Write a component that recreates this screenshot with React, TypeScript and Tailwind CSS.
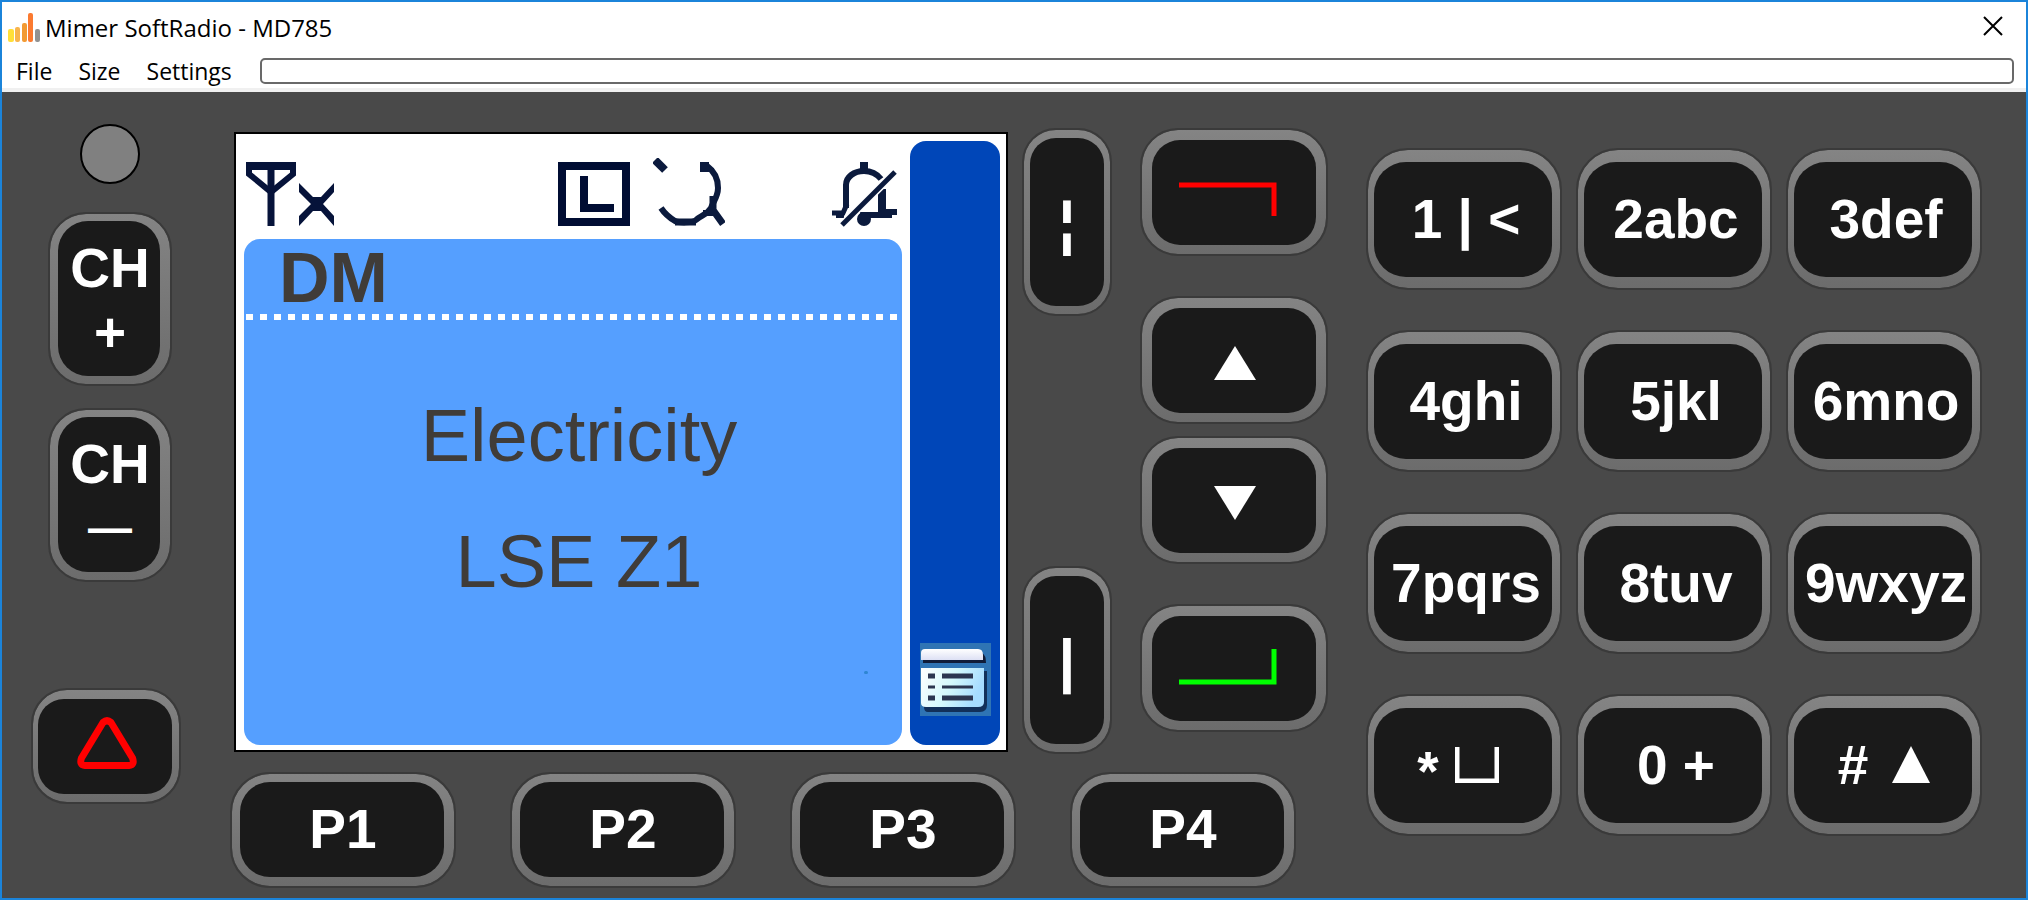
import type { ReactNode } from "react";

type KeyProps = {
  label: string;
  size: string;
  face: string;
  children: ReactNode;
};

function RadioKey({ label, size, face, children }: KeyProps) {
  return (
    <button
      type="button"
      aria-label={label}
      className={`flex border-2 border-[#3a3a3a] bg-linear-to-b from-[#848484] to-[#6c6c6c] bg-clip-padding text-[55px] leading-[64px] font-bold text-white ${size}`}
    >
      <span
        className={`flex flex-1 items-center justify-center self-stretch bg-[#1a1a1a] whitespace-pre ${face}`}
      >
        {children}
      </span>
    </button>
  );
}

function AppIcon() {
  return (
    <svg className="h-[30px] w-8" viewBox="0 0 32 30" aria-hidden="true">
      <rect x="0" y="16" width="6" height="13" rx="2" fill="#ffdf38" />
      <rect x="7" y="14" width="5" height="15" rx="2" fill="#f8b44c" />
      <rect x="14" y="10" width="5" height="19" rx="2" fill="#f29a33" />
      <rect x="20" y="0" width="5" height="29" rx="2" fill="#fb7a30" />
      <rect x="27" y="16" width="5" height="13" rx="2" fill="#929292" />
    </svg>
  );
}

function AntennaIcon() {
  return (
    <svg className="h-[70px] w-[90px]" viewBox="0 0 90 70" fill="none" stroke="#06133a" aria-label="No signal">
      <path d="M0 8H50" strokeWidth="8" />
      <path d="M3 8V16L25 34L47 16V8" strokeWidth="6" />
      <path d="M25 8V68" strokeWidth="7" />
      <path
        d="M53 25L67 39H75L88 25V34L77 46L88 58V68L75 53H67L53 68V58L65 46L53 34Z"
        fill="#06133a"
        stroke="none"
      />
    </svg>
  );
}

function LowPowerIcon() {
  return (
    <svg className="ml-auto h-[70px] w-[72px]" viewBox="0 0 72 70" fill="none" stroke="#000d33" strokeWidth="8" aria-label="Low power">
      <rect x="4" y="8" width="64" height="56" />
      <path d="M26 18V50H56" />
    </svg>
  );
}

function ScanIcon() {
  return (
    <svg className="ml-[23px] h-[70px] w-[72px]" viewBox="0 0 72 70" fill="none" stroke="#0b1a3d" aria-label="Scan">
      <path d="M2 2L12 12" strokeWidth="8" />
      <path d="M47 9H56" strokeWidth="10" />
      <path
        d="M54 8C61 13 65 21 65 30C65 39 60 44 58 50C54 57 48 57 43 62C40 65 26 65 22 63C17 60 12 56 8 50"
        strokeWidth="6"
        strokeLinejoin="round"
      />
      <path d="M60 38V52L70 66" strokeWidth="7" strokeLinejoin="round" />
      <path d="M62 55H50" strokeWidth="6" />
      <path d="M22 64H43" strokeWidth="7" />
    </svg>
  );
}

function BellOffIcon() {
  return (
    <svg className="ml-[107px] h-[70px] w-[65px]" viewBox="0 0 65 70" fill="none" stroke="#0b1a3d" aria-label="Alerts muted">
      <path d="M32 4V14" strokeWidth="8" />
      <path d="M14 50V27C14 19 22 13 32 13C40 13 45 16 49 21" strokeWidth="6" />
      <path d="M50 31V54" strokeWidth="8" />
      <path d="M0 55H11L15 46" strokeWidth="5" />
      <path d="M4 58H12" strokeWidth="4" />
      <path d="M28 57H60M50 54H65" strokeWidth="6" />
      <circle cx="32" cy="61" r="7" fill="#0b1a3d" stroke="none" />
      <path d="M63 14L10 67" stroke="#fff" strokeWidth="8" />
      <path d="M63 14L10 67" strokeWidth="5" />
    </svg>
  );
}

function MenuListIcon() {
  return (
    <svg className="h-[73px] w-[71px]" viewBox="0 0 71 73" aria-label="Menu">
      <defs>
        <linearGradient id="sheet" x1="0" y1="0" x2="1" y2="0.3">
          <stop offset="0" stopColor="#ffffff" />
          <stop offset="0.55" stopColor="#d4f8fc" />
          <stop offset="1" stopColor="#a6dcff" />
        </linearGradient>
        <linearGradient id="tab" x1="0" y1="0" x2="0" y2="1">
          <stop offset="0" stopColor="#ffffff" />
          <stop offset="1" stopColor="#dde0f4" />
        </linearGradient>
      </defs>
      <rect width="71" height="73" fill="#2f74b4" />
      <path d="M3 10H62Q66 12 66 20H3Z" fill="#101c38" />
      <path d="M1 10Q1 6 5 6H58Q63 6 63 12V17H1Z" fill="url(#tab)" />
      <path d="M4 28H67V62Q67 69 60 69H8Q4 69 4 64Z" fill="#12305a" />
      <path d="M1 25H64V59Q64 64 58 64H6Q1 64 1 60Z" fill="url(#sheet)" />
      <path d="M8 33H15M22 33H53M8 55H15M22 55H53" stroke="#2c3650" strokeWidth="5" />
      <path d="M8 44H15M22 44H53" stroke="#2c3650" strokeWidth="3" />
    </svg>
  );
}

function Triangle({ className, points }: { className: string; points: string }) {
  return (
    <svg className={className} viewBox="0 0 42 36" preserveAspectRatio="none" aria-hidden="true">
      <polygon points={points} fill="#fff" />
    </svg>
  );
}

const UP = "21,0 42,36 0,36";
const DOWN = "0,0 42,0 21,36";

const channelSize = "h-[174px] w-[124px] rounded-[38px] pt-[7px] pr-[10px] pb-2 pl-2";
const channelFace = "flex-col rounded-[30px] pl-[2px] pt-[2px]";
const softSize = "h-[188px] w-[90px] rounded-[34px] pt-2 pr-[6px] pb-2 pl-[6px]";
const softFace = "rounded-[26px] pt-[2px] text-[60px]";
const navSize = "h-32 w-[188px] rounded-[38px] px-[10px] pt-[10px] pb-[9px]";
const navFace = "rounded-[28px] pl-[2px]";

const digits = ["1 | <", "2abc", "3def", "4ghi", "5jkl", "6mno", "7pqrs", "8tuv", "9wxyz", "*", "0 +", "#"];

function digitFace(key: string): ReactNode {
  if (key === "*") {
    return (
      <span className="mr-4 flex items-center gap-4">
        <span className="pt-3">*</span>
        <svg className="h-9 w-11" viewBox="0 0 44 36" fill="none" stroke="#fff" aria-hidden="true">
          <path d="M2 0V34H42V0" strokeWidth="5" />
        </svg>
      </span>
    );
  }
  if (key === "#") {
    return (
      <span className="mr-1 flex items-center gap-6">
        <span>#</span>
        <Triangle className="h-[37px] w-[38px]" points={UP} />
      </span>
    );
  }
  return key;
}

export default function App() {
  return (
    <div className="flex min-h-screen flex-col border-2 border-[#1b84da] bg-[#494949] font-['Liberation_Sans',Arial,sans-serif]">
      <header className="border-b-4 border-[#f0f0f0] bg-white font-['Open_Sans','Segoe_UI',sans-serif] text-black">
        <div className="flex h-[52px] items-center pr-[23px] pl-[6px]">
          <AppIcon />
          <h1 className="ml-[5px] text-[24px] leading-8">Mimer SoftRadio - MD785</h1>
          <button type="button" aria-label="Close" className="mb-1 ml-auto">
            <svg className="h-5 w-5" viewBox="0 0 20 20" stroke="#000" strokeWidth="2" aria-hidden="true">
              <path d="M1 1L19 19M19 1L1 19" />
            </svg>
          </button>
        </div>
        <div className="flex h-[34px] items-center pr-3 pl-[14px]">
          <nav className="flex gap-[26px] text-[23px] leading-7">
            <button type="button">File</button>
            <button type="button">Size</button>
            <button type="button">Settings</button>
          </nav>
          <div className="ml-7 h-[26px] flex-1 rounded-[5px] border-2 border-[#696969]" />
        </div>
      </header>

      <main className="flex flex-1 items-start pt-8 pr-11 pb-[10px] pl-[29px]">
        <section aria-label="Channel" className="flex w-[158px] shrink-0 flex-col items-center">
          <div className="size-15 rounded-full border-2 border-black bg-[#808080]" />
          <div className="mt-7 flex flex-col gap-[22px]">
            <RadioKey label="Channel up" size={channelSize} face={channelFace}>
              <span>CH</span>
              <span>+</span>
            </RadioKey>
            <RadioKey label="Channel down" size={channelSize} face={channelFace}>
              <span>CH</span>
              <span className="text-[44px]">—</span>
            </RadioKey>
          </div>
          <div className="mt-[106px] self-start">
            <RadioKey
              label="Emergency"
              size="h-[116px] w-[150px] rounded-[36px] pt-[9px] pr-[7px] pb-2 pl-[5px]"
              face="rounded-[26px] pb-2 pl-1"
            >
              <svg className="h-[52px] w-[60px]" viewBox="0 0 60 52" fill="none" aria-hidden="true">
                <path
                  d="M26 5.500Q30 2 34 5.500L55.500 41Q58 48 52 48.500H8Q2 48 4.500 41Z"
                  stroke="#f00"
                  strokeWidth="7"
                  strokeLinejoin="round"
                />
              </svg>
            </RadioKey>
          </div>
        </section>

        <section aria-label="Radio" className="ml-[41px] flex flex-1 flex-col gap-[18px] pt-1">
          <div className="flex h-[626px] items-start">
            <div className="mt-1 ml-1 flex h-[620px] flex-1 gap-2 border-2 border-black bg-white pt-[7px] pr-[6px] pb-[5px] pl-2">
              <div className="flex flex-1 flex-col">
                <div className="flex h-[98px] items-start pt-[17px] pr-[5px] pl-[2px]">
                  <AntennaIcon />
                  <LowPowerIcon />
                  <ScanIcon />
                  <BellOffIcon />
                </div>
                <div className="relative flex-1 rounded-[16px] bg-[#559fff] text-[#403c38]">
                  <h2 className="pt-1 pl-[35px] text-[70px] leading-[71px] font-bold">DM</h2>
                  <div className="mx-[2px] h-[6px] bg-[repeating-linear-gradient(90deg,#fff_0_7px,transparent_7px_14px)]" />
                  <div className="pt-[53px] pl-3 text-center text-[74px] leading-[126px]">
                    <p>Electricity</p>
                    <p>LSE Z1</p>
                  </div>
                  <span className="absolute right-[34px] bottom-[71px] h-[3px] w-1 rounded-full bg-[#2f86d2]" />
                </div>
              </div>
              <div className="flex w-[90px] items-end justify-center rounded-[16px] bg-[#0046b8] pb-[29px]">
                <MenuListIcon />
              </div>
            </div>

            <div className="ml-[14px] flex h-full flex-col justify-between">
              <RadioKey label="Upper softkey" size={softSize} face={softFace}>
                ¦
              </RadioKey>
              <RadioKey label="Lower softkey" size={softSize} face={softFace}>
                |
              </RadioKey>
            </div>

            <div className="ml-7 flex flex-col gap-10">
              <RadioKey label="Hang up" size={navSize} face={`${navFace} pt-3`}>
                <svg className="mr-[14px] h-[34px] w-[98px]" viewBox="0 0 98 34" fill="none" stroke="#f00" strokeWidth="5" aria-hidden="true">
                  <path d="M0 3H95V34" />
                </svg>
              </RadioKey>
              <div className="flex flex-col gap-3">
                <RadioKey label="Up" size={navSize} face={`${navFace} pt-1`}>
                  <Triangle className="h-[34px] w-[42px]" points={UP} />
                </RadioKey>
                <RadioKey label="Down" size={navSize} face={`${navFace} pt-1`}>
                  <Triangle className="h-[34px] w-[42px]" points={DOWN} />
                </RadioKey>
              </div>
              <RadioKey label="Answer" size={navSize} face={`${navFace} pb-1`}>
                <svg className="mr-[14px] h-9 w-[98px]" viewBox="0 0 98 36" fill="none" stroke="#0f0" strokeWidth="5" aria-hidden="true">
                  <path d="M0 33H95V0" />
                </svg>
              </RadioKey>
            </div>
          </div>

          <div className="grid grid-cols-4 gap-[54px] pr-8">
            {["P1", "P2", "P3", "P4"].map((name) => (
              <RadioKey
                key={name}
                label={name}
                size="h-[116px] w-full rounded-[40px] pt-2 pr-[10px] pb-[9px] pl-2"
                face="rounded-[30px] pb-[2px] pl-[2px]"
              >
                {name}
              </RadioKey>
            ))}
          </div>
        </section>

        <section aria-label="Keypad" className="mt-6 ml-[38px] grid w-[616px] shrink-0 grid-cols-3 gap-x-[14px] gap-y-10">
          {digits.map((key) => (
            <RadioKey
              key={key}
              label={key}
              size="h-[142px] w-full rounded-[42px] pt-3 pr-2 pb-[11px] pl-[6px]"
              face="rounded-[32px] pb-[2px] pl-[6px]"
            >
              {digitFace(key)}
            </RadioKey>
          ))}
        </section>
      </main>
    </div>
  );
}
